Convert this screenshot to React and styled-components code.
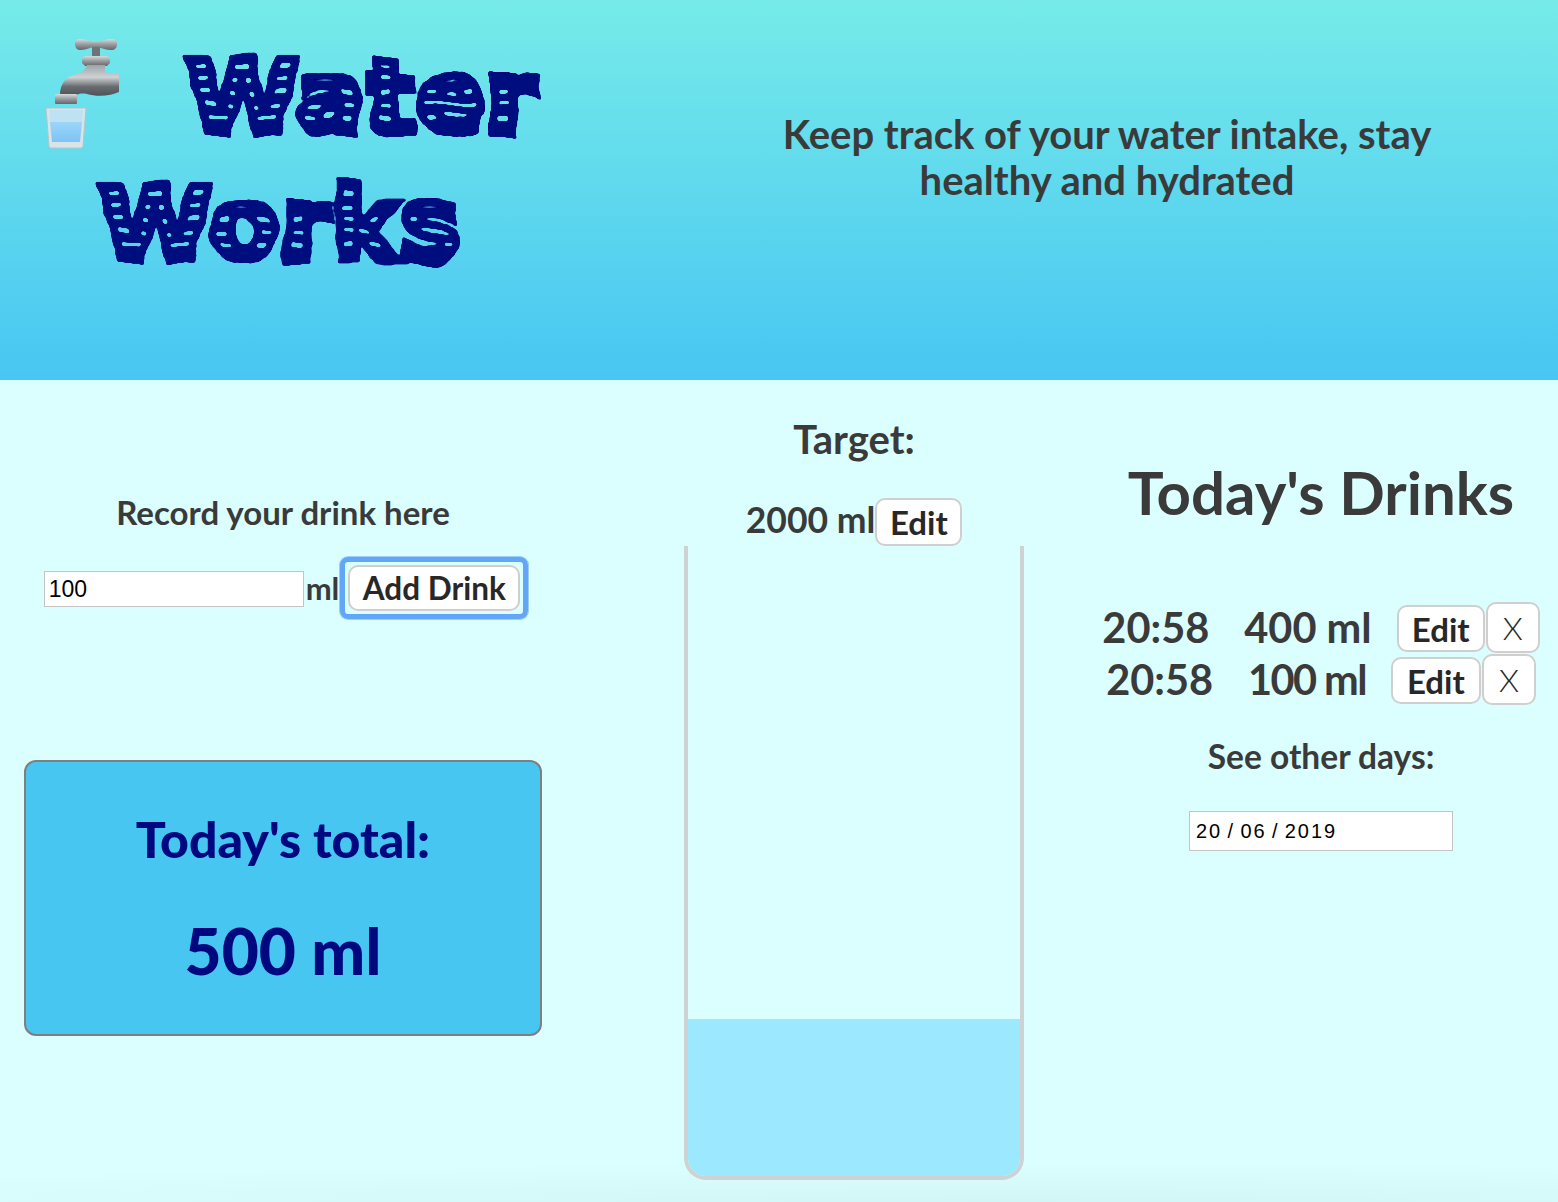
import React from 'react';
import styled, { createGlobalStyle } from 'styled-components';

const GlobalStyle = createGlobalStyle`
  html, body {
    margin: 0;
    padding: 0;
    background: #dbffff;
  }
  body {
    font-family: Lato, 'Noto Sans', sans-serif;
    color: #3a3a3a;
  }
`;

const Page = styled.div`
  width: 1558px;
  height: 1202px;
  overflow: hidden;
  background:
    radial-gradient(ellipse 1400px 40px at 65% 100%, #d2f5f5, rgba(210, 245, 245, 0)),
    #dbffff;
`;

const Header = styled.header`
  height: 380px;
  display: grid;
  grid-template-columns: 566px 1fr;
  column-gap: 90px;
  background: linear-gradient(#76ebe9, #48c6f2);
`;

const Brand = styled.h1`
  margin: 0;
  padding-top: 38px;
  display: flex;
  flex-direction: column;
  font-weight: 400;
`;

const BrandRow = styled.div`
  display: flex;
  align-items: flex-start;
  padding-left: ${(p) => p.$indent || 0}px;
  height: ${(p) => p.$height}px;
`;

const Wavy = styled.span`
  display: inline-block;
  margin-top: ${(p) => p.$top || 0}px;
  margin-left: ${(p) => p.$left || 0}px;
  font-family: 'DejaVu Sans', sans-serif;
  font-weight: 700;
  font-size: 102px;
  line-height: 112px;
  letter-spacing: 1px;
  color: transparent;
  -webkit-text-stroke: 8px #00087f;
  background: repeating-linear-gradient(#00087f 0 9.5px, transparent 9.5px 13px);
  -webkit-background-clip: text;
  background-clip: text;
  filter: url(#water-wave);
`;

const Tagline = styled.p`
  margin: 0;
  padding-top: 111px;
  font-size: 40px;
  line-height: 46px;
  font-weight: 700;
  text-align: center;
  color: #3a3a3a;
`;

const Columns = styled.main`
  display: grid;
  grid-template-columns: 566px 518px 474px;
`;

const LeftColumn = styled.section`
  display: flex;
  flex-direction: column;
  align-items: center;
  padding-top: 113px;
`;

const RecordTitle = styled.h3`
  margin: 0;
  font-size: 33px;
  line-height: 38px;
  font-weight: 700;
`;

const RecordForm = styled.form`
  margin: 26px 0 0;
  padding-left: 6px;
  display: flex;
  align-items: center;
  font-size: 31px;
  font-weight: 700;
`;

const AmountInput = styled.input`
  box-sizing: border-box;
  width: 260px;
  height: 36px;
  margin: 2px 2px 0 0;
  padding: 2px 4px;
  border: 1px solid #c4c4c4;
  border-radius: 0;
  background: #fff;
  font-family: 'Liberation Sans', sans-serif;
  font-size: 23px;
  color: #000;
  outline: none;
`;

const Button = styled.button`
  box-sizing: border-box;
  height: ${(p) => p.$height || 48}px;
  width: ${(p) => p.$width}px;
  margin: ${(p) => p.$margin || 0};
  padding: 0;
  background: #fff;
  border: 2px solid #cfcfcf;
  border-radius: 10px;
  font-family: Lato, 'Noto Sans', sans-serif;
  font-size: ${(p) => p.$size || 33}px;
  font-weight: ${(p) => p.$weight || 700};
  color: #282828;
`;

const FocusRing = styled.span`
  display: inline-flex;
  margin-left: 1px;
  padding: 3px;
  border: 5px solid #62a6f8;
  border-radius: 8px;
  box-shadow: 0 0 0 1px #9ccdfb;
`;

const TotalCard = styled.div`
  box-sizing: border-box;
  width: 518px;
  height: 276px;
  margin-top: 141px;
  padding-top: 49px;
  background: #48c6f2;
  border: 2px solid #7f7f7f;
  border-radius: 12px;
  color: #00087f;
  text-align: center;
  font-weight: 900;
`;

const TotalLabel = styled.div`
  font-size: 50px;
  line-height: 56px;
`;

const TotalValue = styled.div`
  margin-top: 49px;
  font-size: 64px;
  line-height: 70px;
`;

const MiddleColumn = styled.section`
  display: flex;
  flex-direction: column;
  align-items: center;
  margin-left: 58px;
  padding-top: 37px;
`;

const TargetTitle = styled.h3`
  margin: 0;
  font-size: 40px;
  line-height: 44px;
  font-weight: 700;
`;

const TargetRow = styled.div`
  margin-top: 37px;
  display: flex;
  align-items: center;
  height: 48px;
  font-size: 35.5px;
  font-weight: 700;
`;

const TargetValue = styled.span`
  margin-bottom: 5px;
`;

const Glass = styled.div`
  box-sizing: border-box;
  width: 340px;
  height: 634px;
  display: flex;
  flex-direction: column;
  justify-content: flex-end;
  overflow: hidden;
  border: 4px solid #cfd2d2;
  border-top: 0;
  border-radius: 0 0 22px 22px;
`;

const GlassWater = styled.div`
  background: #9be8ff;
`;

const RightColumn = styled.section`
  display: flex;
  flex-direction: column;
  align-items: center;
  padding-top: 76px;
`;

const DrinksTitle = styled.h2`
  margin: 0;
  font-size: 60px;
  line-height: 72px;
  font-weight: 700;
`;

const DrinkList = styled.ul`
  list-style: none;
  margin: 73px 0 0;
  padding: 0;
`;

const DrinkRow = styled.li`
  display: flex;
  justify-content: center;
  align-items: center;
  height: 52px;
  font-size: 41.5px;
  font-weight: 700;
`;

const DrinkTime = styled.span`
  margin-right: 35px;
`;

const DrinkAmount = styled.span`
  margin-right: 25px;
  letter-spacing: ${(p) => p.$tracking || 0}px;
`;

const OtherDays = styled.h3`
  margin: 32px 0 0;
  font-size: 33.5px;
  line-height: 38px;
  font-weight: 700;
`;

const DateInput = styled.input`
  box-sizing: border-box;
  width: 264px;
  height: 40px;
  margin-top: 36px;
  padding: 2px 6px;
  border: 1px solid #c4c4c4;
  border-radius: 0;
  background: #fff;
  font-family: 'Liberation Sans', sans-serif;
  font-size: 20px;
  letter-spacing: 1.9px;
  word-spacing: -2px;
  color: #000;
  outline: none;
`;

const HiddenDefs = styled.svg`
  position: absolute;
  width: 0;
  height: 0;
`;

const TapSvg = styled.svg`
  flex: none;
  width: 74px;
  height: 111px;
`;

const drinks = [
  { id: 1, time: '20:58', amount: 400, tracking: 0, editWidth: 88 },
  { id: 2, time: '20:58', amount: 100, tracking: -1.6, editWidth: 90 },
];

const target = 2000;
const total = drinks.reduce((sum, drink) => sum + drink.amount, 0);

function Tap() {
  return (
    <TapSvg viewBox="46 37 74 111" aria-hidden="true">
      <defs>
        <linearGradient id="metal" x1="0" y1="0" x2="0" y2="1">
          <stop offset="0" stopColor="#d8dadc" />
          <stop offset="0.5" stopColor="#979b9f" />
          <stop offset="1" stopColor="#63676b" />
        </linearGradient>
        <linearGradient id="pipe" x1="0" y1="0" x2="0" y2="1">
          <stop offset="0" stopColor="#9fa3a7" />
          <stop offset="0.4" stopColor="#cfd2d4" />
          <stop offset="0.7" stopColor="#696d71" />
          <stop offset="1" stopColor="#4f5256" />
        </linearGradient>
        <linearGradient id="cupWater" x1="0" y1="0" x2="0" y2="1">
          <stop offset="0" stopColor="#9bd6fa" />
          <stop offset="1" stopColor="#7dc3f4" />
        </linearGradient>
      </defs>
      <path d="M75 42c0-3 2-4 5-4 5 0 9 2 13 3h5c4-1 8-3 13-3 4 0 6 1 6 5s-2 6-6 6c-5 0-9-2-13-3h-5c-4 1-8 3-13 3-3 0-5-2-5-7z" fill="url(#metal)" />
      <rect x="92" y="46" width="8" height="10" fill="#6f7378" />
      <path d="M85 55h22l3 3v4l-3 3H85l-3-3v-4z" fill="url(#metal)" />
      <path d="M87 64h18v8h14v19c-8 4-22 5-32 2-5-1-9 0-11 1H60c0-10 5-18 14-20 7-2 11-4 13-10z" fill="url(#pipe)" />
      <rect x="55" y="93" width="22" height="10" rx="1" fill="url(#metal)" />
      <path d="M46 107h40l-3 38c0 1-1 2-2 2H51c-1 0-2-1-2-2z" fill="#d9e4e8" stroke="#b4c4ca" strokeWidth="1" />
      <path d="M49 109h34l-1 12H50z" fill="#bfe2f2" />
      <path d="M50 121h32l-2 20H52z" fill="url(#cupWater)" />
    </TapSvg>
  );
}

function App() {
  return (
    <Page>
      <GlobalStyle />
      <HiddenDefs aria-hidden="true">
        <filter id="water-wave" x="-5%" y="-5%" width="110%" height="110%">
          <feTurbulence type="fractalNoise" baseFrequency="0.025 0.04" numOctaves="1" seed="4" result="noise" />
          <feDisplacementMap in="SourceGraphic" in2="noise" scale="12" xChannelSelector="R" yChannelSelector="G" result="moved" />
          <feGaussianBlur in="moved" stdDeviation="1.2" result="soft" />
          <feComponentTransfer in="soft">
            <feFuncA type="linear" slope="5" intercept="-2" />
          </feComponentTransfer>
        </filter>
      </HiddenDefs>

      <Header>
        <Brand>
          <BrandRow $height={131} $indent={46}>
            <Tap />
            <Wavy $top={4} $left={66}>Water</Wavy>
          </BrandRow>
          <BrandRow $height={100} $indent={99}>
            <Wavy>Works</Wavy>
          </BrandRow>
        </Brand>
        <Tagline>
          Keep track of your water intake, stay
          <br />
          healthy and hydrated
        </Tagline>
      </Header>

      <Columns>
        <LeftColumn>
          <RecordTitle>Record your drink here</RecordTitle>
          <RecordForm onSubmit={(e) => e.preventDefault()}>
            <AmountInput defaultValue="100" />
            <span>ml</span>
            <FocusRing>
              <Button type="submit" $width={172} $height={46} $size={31.5}>Add Drink</Button>
            </FocusRing>
          </RecordForm>
          <TotalCard>
            <TotalLabel>Today's total:</TotalLabel>
            <TotalValue>{total} ml</TotalValue>
          </TotalCard>
        </LeftColumn>

        <MiddleColumn>
          <TargetTitle>Target:</TargetTitle>
          <TargetRow>
            <TargetValue>{target} ml</TargetValue>
            <Button type="button" $width={87}>Edit</Button>
          </TargetRow>
          <Glass>
            <GlassWater style={{ height: `${(total / target) * 100}%` }} />
          </Glass>
        </MiddleColumn>

        <RightColumn>
          <DrinksTitle>Today's Drinks</DrinksTitle>
          <DrinkList>
            {drinks.map((drink) => (
              <DrinkRow key={drink.id}>
                <DrinkTime>{drink.time}</DrinkTime>
                <DrinkAmount $tracking={drink.tracking}>{drink.amount} ml</DrinkAmount>
                <Button type="button" $width={drink.editWidth} $height={47} $margin="3px 1px 0 0">Edit</Button>
                <Button type="button" $width={54} $height={51} $size={32} $weight={300}>X</Button>
              </DrinkRow>
            ))}
          </DrinkList>
          <OtherDays>See other days:</OtherDays>
          <DateInput readOnly value="20 / 06 / 2019" />
        </RightColumn>
      </Columns>
    </Page>
  );
}

export default App;
